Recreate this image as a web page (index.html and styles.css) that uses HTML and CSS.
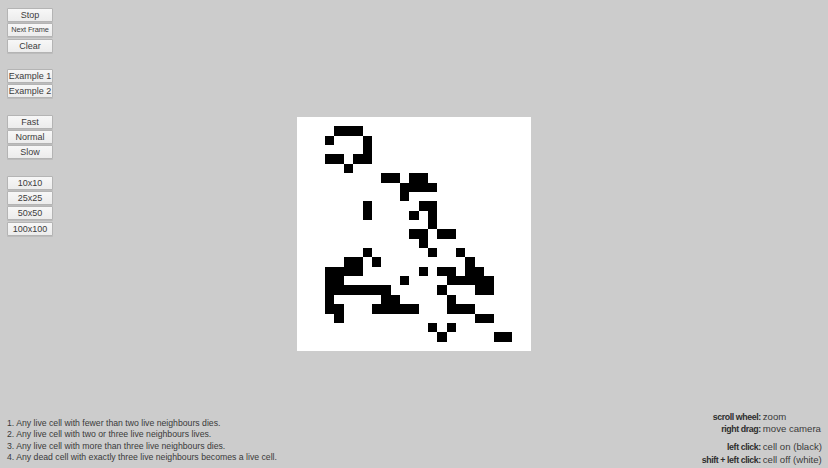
FILE: index.html
```html
<!DOCTYPE html>
<html>
<head>
<meta charset="utf-8">
<link rel="stylesheet" href="styles.css">
</head>
<body>
<div class="app">
  <div class="controls">
    <div class="group">
      <button class="btn">Stop</button>
      <button class="btn small">Next Frame</button>
      <button class="btn">Clear</button>
    </div>
    <div class="group">
      <button class="btn">Example 1</button>
      <button class="btn">Example 2</button>
    </div>
    <div class="group">
      <button class="btn">Fast</button>
      <button class="btn">Normal</button>
      <button class="btn">Slow</button>
    </div>
    <div class="group">
      <button class="btn">10x10</button>
      <button class="btn">25x25</button>
      <button class="btn">50x50</button>
      <button class="btn">100x100</button>
    </div>
  </div>

  <svg class="board" viewBox="0 0 25 25" shape-rendering="crispEdges">
    <rect x="0" y="0" width="25" height="25" fill="#fff"/>
    <g fill="#000">
      <rect x="4" y="1" width="3" height="1"/>
      <rect x="3" y="2" width="1" height="1"/>
      <rect x="7" y="2" width="1" height="3"/>
      <rect x="3" y="4" width="2" height="1"/>
      <rect x="6" y="4" width="1" height="1"/>
      <rect x="5" y="5" width="1" height="1"/>
      <rect x="9" y="6" width="2" height="1"/>
      <rect x="12" y="6" width="2" height="1"/>
      <rect x="11" y="7" width="4" height="1"/>
      <rect x="11" y="8" width="1" height="1"/>
      <rect x="7" y="9" width="1" height="2"/>
      <rect x="13" y="9" width="2" height="1"/>
      <rect x="12" y="10" width="1" height="1"/>
      <rect x="14" y="10" width="1" height="2"/>
      <rect x="12" y="12" width="2" height="1"/>
      <rect x="15" y="12" width="2" height="1"/>
      <rect x="13" y="13" width="1" height="1"/>
      <rect x="7" y="14" width="1" height="1"/>
      <rect x="14" y="14" width="1" height="1"/>
      <rect x="17" y="14" width="1" height="1"/>
      <rect x="5" y="15" width="2" height="1"/>
      <rect x="8" y="15" width="1" height="1"/>
      <rect x="18" y="15" width="1" height="1"/>
      <rect x="3" y="16" width="4" height="1"/>
      <rect x="13" y="16" width="1" height="1"/>
      <rect x="15" y="16" width="2" height="1"/>
      <rect x="18" y="16" width="2" height="1"/>
      <rect x="3" y="17" width="2" height="1"/>
      <rect x="11" y="17" width="1" height="1"/>
      <rect x="16" y="17" width="5" height="1"/>
      <rect x="3" y="18" width="7" height="1"/>
      <rect x="15" y="18" width="1" height="1"/>
      <rect x="19" y="18" width="2" height="1"/>
      <rect x="3" y="19" width="1" height="1"/>
      <rect x="9" y="19" width="2" height="1"/>
      <rect x="16" y="19" width="1" height="1"/>
      <rect x="3" y="20" width="2" height="1"/>
      <rect x="8" y="20" width="5" height="1"/>
      <rect x="16" y="20" width="3" height="1"/>
      <rect x="4" y="21" width="1" height="1"/>
      <rect x="19" y="21" width="2" height="1"/>
      <rect x="14" y="22" width="1" height="1"/>
      <rect x="16" y="22" width="1" height="1"/>
      <rect x="15" y="23" width="1" height="1"/>
      <rect x="21" y="23" width="2" height="1"/>
    </g>
  </svg>

  <ol class="rules">
    <li>1. Any live cell with fewer than two live neighbours dies.</li>
    <li>2. Any live cell with two or three live neighbours lives.</li>
    <li>3. Any live cell with more than three live neighbours dies.</li>
    <li>4. Any dead cell with exactly three live neighbours becomes a live cell.</li>
  </ol>

  <div class="help">
    <span class="key">scroll wheel:</span><span class="val">zoom</span>
    <span class="key">right drag:</span><span class="val">move camera</span>
    <span class="key sep">left click:</span><span class="val sep">cell on (black)</span>
    <span class="key">shift + left click:</span><span class="val">cell off (white)</span>
  </div>
</div>
</body>
</html>
```

FILE: styles.css
```css
html, body {
  margin: 0;
  padding: 0;
  background: #cccccc;
}

.app {
  width: 828px;
  height: 468px;
  display: grid;
  grid-template-columns: 1fr;
  grid-template-rows: 1fr;
  font-family: "Liberation Sans", Arial, sans-serif;
  color: #3a3a3a;
  overflow: hidden;
}

.app > * {
  grid-area: 1 / 1;
}

.controls {
  align-self: start;
  justify-self: start;
  margin: 8px 0 0 7px;
  display: flex;
  flex-direction: column;
  gap: 16.5px;
}

.group {
  display: flex;
  flex-direction: column;
  gap: 1.25px;
}

.btn {
  width: 46px;
  height: 14px;
  box-sizing: border-box;
  margin: 0;
  padding: 0;
  border: 1px solid #b4b4b4;
  border-radius: 1px;
  background: linear-gradient(#f7f7f7, #ececec);
  box-shadow: 0 1px 0 rgba(0,0,0,0.08);
  font-family: "Liberation Sans", Arial, sans-serif;
  font-size: 9px;
  line-height: 12px;
  color: #3c3c3c;
  text-align: center;
  white-space: nowrap;
}

.btn.small {
  font-size: 7.4px;
  letter-spacing: -0.1px;
}

.board {
  width: 234px;
  height: 234px;
  place-self: center;
  display: block;
}

.rules {
  align-self: end;
  justify-self: start;
  list-style: none;
  margin: 0 0 4.5px 7px;
  padding: 0;
  font-size: 8.7px;
  line-height: 11.5px;
  color: #3a3a3a;
}

.help {
  align-self: end;
  justify-self: end;
  margin: 0 6px 2px 0;
  display: grid;
  grid-template-columns: auto auto;
  column-gap: 2px;
  line-height: 12.3px;
  white-space: nowrap;
}

.key {
  text-align: right;
  font-weight: bold;
  font-size: 8.8px;
  letter-spacing: -0.4px;
  color: #2e2e2e;
}

.val {
  text-align: left;
  font-size: 9.6px;
  color: #3a3a3a;
}

.sep {
  margin-top: 6px;
}
```
